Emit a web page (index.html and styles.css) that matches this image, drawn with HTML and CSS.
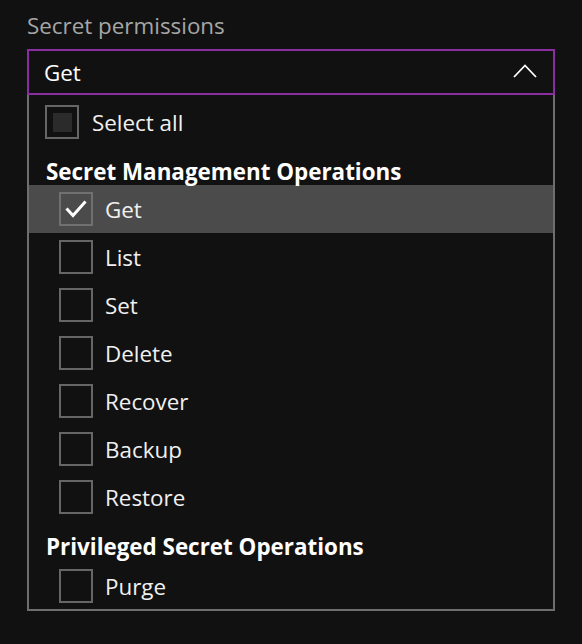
FILE: index.html
```html
<!DOCTYPE html>
<html lang="en">
<head>
<meta charset="utf-8">
<title>Secret permissions</title>
<link rel="stylesheet" href="styles.css">
</head>
<body>
<div class="field">
  <div class="label">Secret permissions</div>
  <div class="combo">
    <span class="combo-value">Get</span>
    <svg class="chevron" width="24" height="14" viewBox="0 0 24 14"><path d="M1 13 L12 1.5 L23 13" fill="none" stroke="#fff" stroke-width="1.8"/></svg>
  </div>
  <div class="list">
    <div class="row top"><span class="box partial"></span><span class="text">Select all</span></div>
    <div class="heading first">Secret Management Operations</div>
    <div class="row item selected"><span class="box checked"><svg width="22" height="18" viewBox="0 0 22 18"><path d="M1.5 8.5 L8 15.5 L20.5 1.5" fill="none" stroke="#fff" stroke-width="3"/></svg></span><span class="text">Get</span></div>
    <div class="row item"><span class="box"></span><span class="text">List</span></div>
    <div class="row item"><span class="box"></span><span class="text">Set</span></div>
    <div class="row item"><span class="box"></span><span class="text">Delete</span></div>
    <div class="row item"><span class="box"></span><span class="text">Recover</span></div>
    <div class="row item"><span class="box"></span><span class="text">Backup</span></div>
    <div class="row item"><span class="box"></span><span class="text">Restore</span></div>
    <div class="heading second">Privileged Secret Operations</div>
    <div class="row item last"><span class="box"></span><span class="text">Purge</span></div>
  </div>
</div>
</body>
</html>
```
FILE: styles.css
```css
html, body {
  margin: 0;
  padding: 0;
  background: #111111;
}
body {
  font-family: "Open Sans", "Noto Sans", sans-serif;
  color: #ffffff;
  width: 582px;
  height: 644px;
  overflow: hidden;
}
.field {
  padding: 11px 27px 0 27px;
  width: 528px;
}
.label {
  font-size: 22.4px;
  line-height: 30px;
  color: #a6a6a6;
  height: 38px;
}
.combo {
  box-sizing: border-box;
  height: 46px;
  border: 2px solid #8a2da0;
  display: flex;
  align-items: center;
  justify-content: space-between;
  padding: 0 16px 0 15px;
}
.combo-value {
  font-size: 22.4px;
  color: #ffffff;
  line-height: 30px;
  padding-top: 2px;
}
.chevron {
  display: block;
  margin-top: -2px;
}
.list {
  box-sizing: border-box;
  border: 2px solid #6e6e6e;
  border-top: none;
  padding-top: 3px;
}
.row {
  display: flex;
  align-items: center;
  height: 48px;
  padding-left: 16px;
}
.row.item {
  padding-left: 30px;
}
.row.last {
  height: 47px;
}
.row.selected {
  background: #4b4b4b;
}
.box {
  box-sizing: border-box;
  width: 34px;
  height: 34px;
  border: 2px solid #666666;
  display: flex;
  align-items: center;
  justify-content: center;
  flex: none;
}
.row.selected .box {
  border-color: #707070;
}
.box.partial::after {
  content: "";
  width: 19px;
  height: 19px;
  background: #2b2b2b;
}
.box.checked svg {
  display: block;
}
.text {
  font-size: 22.4px;
  line-height: 30px;
  color: #f0f0f0;
  margin-left: 13px;
  padding-top: 2px;
}
.row.item .text {
  margin-left: 12px;
}
.heading {
  font-size: 22.4px;
  font-weight: 700;
  line-height: 26px;
  color: #ffffff;
  padding-left: 17px;
  display: flex;
  align-items: flex-end;
  box-sizing: border-box;
  padding-bottom: 0;
}
.heading.first {
  height: 39px;
}
.heading.second {
  height: 41px;
  padding-bottom: 2px;
}
```
